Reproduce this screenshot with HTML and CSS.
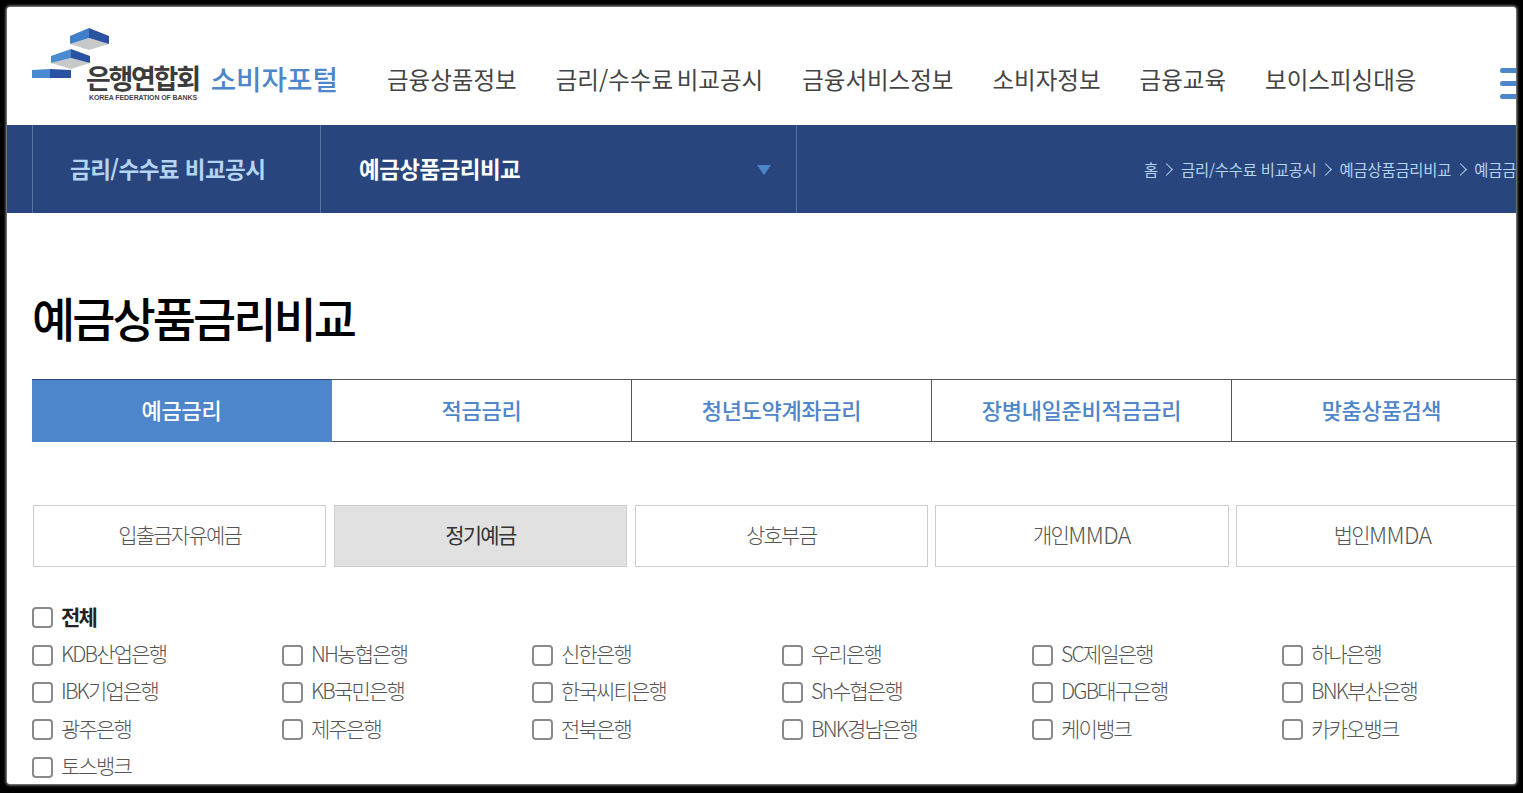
FILE: index.html
```html
<!DOCTYPE html>
<html lang="ko">
<head>
<meta charset="utf-8">
<title>예금상품금리비교</title>
<link rel="stylesheet" href="styles.css">
</head>
<body>
<div class="shot">
  <header class="header">
    <a class="logo">
      <svg class="logo-mark" width="78" height="52" viewBox="0 0 78 52">
        <polygon points="38,16 57,10 77,16 57,22" fill="#c6c8ca"/>
        <polygon points="38,8 57,0 57,10 38,16" fill="#3f7fc8"/>
        <polygon points="57,0 77,8 77,16 57,10" fill="#2b52a0"/>
        <polygon points="19,35 39,30 58,35 39,41" fill="#c6c8ca"/>
        <polygon points="19,28 39,21 39,30 19,35" fill="#4a8ad0"/>
        <polygon points="39,21 58,28 58,35 39,30" fill="#2b52a0"/>
        <polygon points="0,42 18,41 18,50 0,50" fill="#4a8ad0"/>
        <polygon points="18,41 39,42 39,50 18,50" fill="#2b52a0"/>
      </svg>
      <span class="logo-org">
        <span class="logo-kr">은행연합회</span>
        <span class="logo-en">KOREA FEDERATION OF BANKS</span>
      </span>
      <span class="logo-portal">소비자포털</span>
    </a>
    <nav class="gnb">
      <a>금융상품정보</a>
      <a>금리/수수료 비교공시</a>
      <a>금융서비스정보</a>
      <a>소비자정보</a>
      <a>금융교육</a>
      <a>보이스피싱대응</a>
    </nav>
    <div class="burger"><i></i><i></i><i></i></div>
  </header>
  <div class="subbar">
    <div class="sub-one">금리/수수료 비교공시</div>
    <div class="sub-two">예금상품금리비교<span class="caret"></span></div>
    <div class="crumbs">
      <span>홈</span><b class="chev"></b><span>금리/수수료 비교공시</span><b class="chev"></b><span>예금상품금리비교</span><b class="chev"></b><span>예금금리</span>
    </div>
  </div>
  <main class="main">
    <h1 class="title">예금상품금리비교</h1>
    <div class="tabs">
      <a class="tab on">예금금리</a>
      <a class="tab">적금금리</a>
      <a class="tab">청년도약계좌금리</a>
      <a class="tab">장병내일준비적금금리</a>
      <a class="tab">맞춤상품검색</a>
    </div>
    <div class="kinds">
      <a class="kind">입출금자유예금</a>
      <a class="kind on">정기예금</a>
      <a class="kind">상호부금</a>
      <a class="kind">개인<span class="latin">MMDA</span></a>
      <a class="kind">법인<span class="latin">MMDA</span></a>
    </div>
    <label class="check all"><i class="box"></i>전체</label>
    <div class="banks">
      <label class="check"><i class="box"></i>KDB산업은행</label>
      <label class="check"><i class="box"></i>NH농협은행</label>
      <label class="check"><i class="box"></i>신한은행</label>
      <label class="check"><i class="box"></i>우리은행</label>
      <label class="check"><i class="box"></i>SC제일은행</label>
      <label class="check"><i class="box"></i>하나은행</label>
      <label class="check"><i class="box"></i>IBK기업은행</label>
      <label class="check"><i class="box"></i>KB국민은행</label>
      <label class="check"><i class="box"></i>한국씨티은행</label>
      <label class="check"><i class="box"></i>Sh수협은행</label>
      <label class="check"><i class="box"></i>DGB대구은행</label>
      <label class="check"><i class="box"></i>BNK부산은행</label>
      <label class="check"><i class="box"></i>광주은행</label>
      <label class="check"><i class="box"></i>제주은행</label>
      <label class="check"><i class="box"></i>전북은행</label>
      <label class="check"><i class="box"></i>BNK경남은행</label>
      <label class="check"><i class="box"></i>케이뱅크</label>
      <label class="check"><i class="box"></i>카카오뱅크</label>
      <label class="check"><i class="box"></i>토스뱅크</label>
    </div>
  </main>
</div>
</body>
</html>
```
FILE: styles.css
```css
* { box-sizing: border-box; }
html, body { margin: 0; height: 100%; overflow: hidden; background: #000; }
body { padding: 7px 7px 9px 7px; font-family: "Noto Sans CJK KR", "Noto Sans", sans-serif; color: #444; }
.shot { width: 1509px; height: 777px; background: #fff; overflow: hidden; border-radius: 3px; box-shadow: 0 0 3px 1px #aaa; }

.header { height: 118px; display: flex; align-items: flex-start; padding-left: 25px; white-space: nowrap; }
.logo { position: relative; display: flex; width: 306px; flex: none; padding: 56px 0 0 54px; }
.logo-mark { position: absolute; left: 0; top: 21px; }
.logo-org { display: flex; flex-direction: column; width: 125px; }
.logo-kr { font-size: 27px; line-height: 30px; font-weight: 700; letter-spacing: -2.3px; color: #3c3c3c; }
.logo-en { font-size: 7px; line-height: 8px; font-family: "Liberation Sans", sans-serif; font-weight: 700; color: #444; margin: 1px 0 0 3px; letter-spacing: -.1px; }
.logo-portal { font-size: 27.7px; line-height: 32px; font-weight: 500; color: #4d86ca; margin-top: -1px; }

.gnb { display: flex; gap: 39px; margin-left: 49px; padding-top: 54px; flex: none; }
.gnb a { font-size: 23.5px; line-height: 36px; color: #444; word-spacing: -3px; }
.burger { display: flex; flex-direction: column; gap: 8px; margin: 61px 0 0 84px; flex: none; }
.burger i { display: block; width: 20px; height: 5px; border-radius: 3px; background: #4d86ca; }

.subbar { height: 88px; background: #29457d; display: flex; padding-left: 25px; white-space: nowrap; }
.sub-one, .sub-two { flex: none; display: flex; align-items: center; padding-bottom: 2px; border-left: 1px solid #5a73a2; font-size: 22.5px; font-weight: 700; letter-spacing: -.55px; }
.sub-one { width: 288px; padding-left: 37px; color: #b4d4f2; }
.sub-two { padding-left: 38px; color: #fff; border-right: 1px solid #5a73a2; position: relative; width: 477px; }
.caret { position: absolute; left: 436px; top: 40px; border: 7px solid transparent; border-top: 10px solid #4d86ca; border-bottom: 0; }
.crumbs { display: flex; align-items: center; padding-left: 347px; font-size: 15.4px; color: #b4d4f2; letter-spacing: -.2px; flex: none; }
.chev { width: 9px; height: 9px; border-top: 1px solid #b4d4f2; border-right: 1px solid #b4d4f2; transform: rotate(45deg); margin: 0 9.5px 0 4.5px; }

.main { padding: 72px 0 0 25px; }
.title { margin: 0; font-size: 47px; line-height: 64px; font-weight: 500; color: #000; letter-spacing: -3px; white-space: nowrap; }
.tabs { display: flex; margin-top: 30px; width: 1500px; }
.tab { flex: none; width: 300px; height: 63px; padding-bottom: 3px; display: flex; align-items: center; justify-content: center; border: solid #555; border-width: 1px 1px 1px 0; font-size: 22px; font-weight: 500; color: #4d86ca; letter-spacing: -.3px; }
.tab.on { background: #4d86ca; color: #fff; border-color: #29457d #4d86ca #4d86ca; }
.kinds { display: grid; grid-template-columns: repeat(5, 293.25px); gap: 7.5px; margin: 63px 0 0 1px; }
.kind { height: 62px; padding-bottom: 4px; display: flex; align-items: center; justify-content: center; border: 1px solid #ccc; font-size: 21px; font-weight: 300; color: #555; letter-spacing: -1.8px; white-space: nowrap; }
.kind.on { background: #e1e1e1; color: #333; font-weight: 400; }
.latin { font-size: 23px; letter-spacing: -.6px; }
.check { display: flex; align-items: center; height: 37.4px; font-size: 21px; font-weight: 300; color: #555; letter-spacing: -1.8px; white-space: nowrap; }
.box { flex: none; width: 21px; height: 21px; margin: 4px 8px 0 0; background: #fff; border: 2px solid #8a8a8a; border-radius: 4px; }
.all { margin-top: 30px; font-weight: 700; color: #222; }
.banks { display: grid; grid-template-columns: repeat(6, 250px); }
```
